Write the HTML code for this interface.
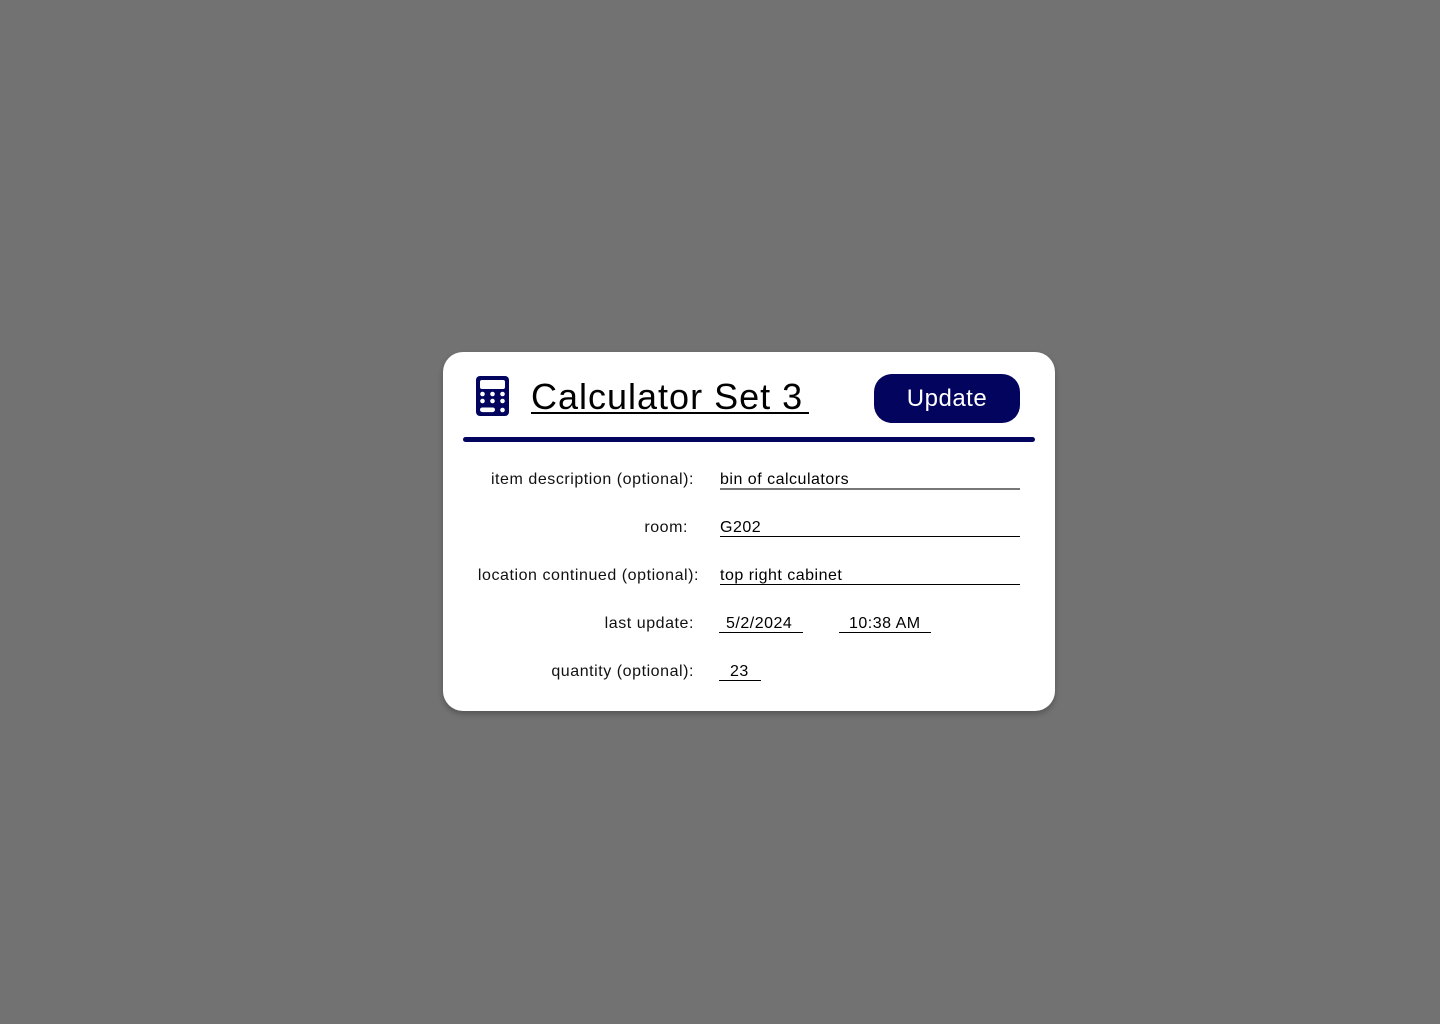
<!DOCTYPE html>
<html><head><meta charset="utf-8"><style>
body{margin:0;width:1440px;height:1024px;background:#727272;font-family:"Liberation Sans",sans-serif;position:relative;overflow:hidden}
.card{position:absolute;left:443px;top:352px;width:612px;height:359px;background:#fff;border-radius:20px;box-shadow:0 3px 6px rgba(0,0,0,.25)}
.a{position:absolute;white-space:nowrap}
.lbl{font-size:16px;color:#111;text-align:right;line-height:20px;letter-spacing:0.55px}
.val{font-size:16px;color:#000;line-height:20px;letter-spacing:0.5px}
.ul{position:absolute;height:1px;background:#000}
</style></head><body>
<div class="card"></div>
<svg class="a" style="left:476px;top:376px" width="33" height="40" viewBox="0 0 33 40">
<rect x="0" y="0" width="33" height="40" rx="4" fill="#03045e"/>
<rect x="4" y="4" width="25" height="9" rx="2" fill="#fff"/>
<g fill="#fff"><circle cx="6.5" cy="18" r="2.3"/><circle cx="16.5" cy="18" r="2.3"/><circle cx="26.5" cy="18" r="2.3"/>
<circle cx="6.5" cy="25" r="2.3"/><circle cx="16.5" cy="25" r="2.3"/><circle cx="26.5" cy="25" r="2.3"/>
<rect x="4" y="31.5" width="15" height="4.6" rx="2.3"/><circle cx="26.5" cy="34" r="2.3"/></g>
</svg>
<div class="a" style="left:531px;top:375px;font-size:36px;line-height:44px;color:#000;letter-spacing:1px">Calculator Set 3</div>
<div class="ul" style="left:531px;top:412px;width:278px;height:2px"></div>
<div class="a" style="left:874px;top:374px;width:146px;height:49px;background:#03045e;border-radius:18px;color:#fff;font-size:24px;line-height:50px;text-align:center;letter-spacing:0.5px">Update</div>
<div class="a" style="left:463px;top:437px;width:572px;height:5px;background:#03045e;border-radius:3px"></div>

<div class="a lbl" style="right:746px;top:470px">item description (optional):</div>
<div class="a val" style="left:720px;top:470px">bin of calculators</div>
<div class="ul" style="left:720px;top:488px;width:300px;height:2px;background:#777"></div>

<div class="a lbl" style="right:752px;top:518px">room:</div>
<div class="a val" style="left:720px;top:518px">G202</div>
<div class="ul" style="left:720px;top:536px;width:300px"></div>

<div class="a lbl" style="right:741px;top:566px">location continued (optional):</div>
<div class="a val" style="left:720px;top:566px">top right cabinet</div>
<div class="ul" style="left:720px;top:584px;width:300px"></div>

<div class="a lbl" style="right:746px;top:614px">last update:</div>
<div class="a val" style="left:726px;top:614px">5/2/2024</div>
<div class="ul" style="left:719px;top:632px;width:84px"></div>
<div class="a val" style="left:849px;top:614px">10:38 AM</div>
<div class="ul" style="left:839px;top:632px;width:92px"></div>

<div class="a lbl" style="right:746px;top:662px">quantity (optional):</div>
<div class="a val" style="left:730px;top:662px">23</div>
<div class="ul" style="left:719px;top:680px;width:42px"></div>
</body></html>
